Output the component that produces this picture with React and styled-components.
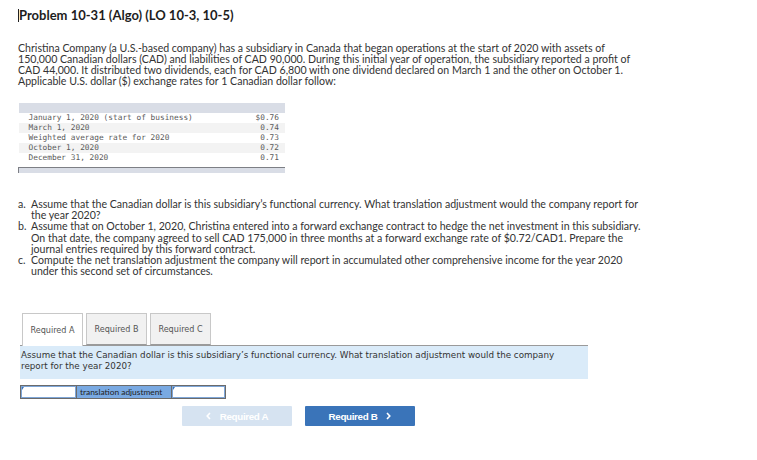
import React from "react";
import styled, { createGlobalStyle } from "styled-components";

const Global = createGlobalStyle`
  html, body { margin: 0; padding: 0; background: #fff; }
  body { font-family: "Lato", "Open Sans", sans-serif; color: #333; }
`;

const Page = styled.div`
  width: 757px;
  height: 460px;
  box-sizing: border-box;
  padding: 7px 0 0 18px;
  overflow: hidden;
`;

const Title = styled.h1`
  margin: 0;
  font-family: "Lato", sans-serif;
  font-weight: 700;
  font-size: 13px;
  line-height: 16px;
  color: #1d1d1d;
  display: flex;
  align-items: center;
`;

const Caret = styled.span`
  display: inline-block;
  width: 1px;
  height: 13px;
  background: #222;
`;

const Para = styled.p`
  margin: 20px 0 0 0;
  font-size: 10.6px;
  line-height: 11px;
  color: #333;
  white-space: nowrap;
`;

const RateTable = styled.table`
  margin-top: 16px;
  width: 267px;
  border-collapse: collapse;
  font-family: "DejaVu Sans Mono", "Liberation Mono", monospace;
  font-size: 7.8px;
  color: #5a5a5a;
`;

const HeadRow = styled.tr`
  height: 10px;
  background: #d9dde6;
`;

const Row = styled.tr`
  height: 10px;
  background: ${(p) => (p.$shade ? "#f3f3f3" : "#fff")};
`;

const Cell = styled.td`
  padding: 0 ${(p) => (p.$right ? "6px" : "0")} 0 ${(p) => (p.$right ? "0" : "10px")};
  text-align: ${(p) => (p.$right ? "right" : "left")};
  line-height: 10px;
  white-space: pre;
`;

const Spacer = styled.tr`
  height: 4px;
`;

const FootRow = styled.tr`
  height: 6px;
  background: #d9dde6;
  td {
    padding: 0;
    border-top: 1px solid #7d7f85;
  }
  td:first-child {
    border-left: 1px solid #7d7f85;
  }
`;

const List = styled.ol`
  margin: 26px 0 0 0;
  padding: 0;
  list-style: none;
  font-size: 10.6px;
  line-height: 11.2px;
  color: #333;
  white-space: nowrap;
`;

const Item = styled.li`
  display: grid;
  grid-template-columns: 13px auto;
`;

const Marker = styled.span``;

const TabArea = styled.div`
  margin-top: 36px;
  width: 568px;
  margin-left: 2px;
`;

const TabRow = styled.div`
  display: flex;
  gap: 3px;
  padding-left: 2px;
  height: 32px;
  position: relative;
  z-index: 1;
`;

const Tab = styled.div`
  width: 61px;
  box-sizing: border-box;
  height: ${(p) => (p.$active ? "33px" : "32px")};
  border: 1px solid #c8c8c8;
  border-bottom: ${(p) => (p.$active ? "none" : "1px solid #9a9a9a")};
  background: ${(p) => (p.$active ? "#fff" : "#f1f1f1")};
  font-family: "DejaVu Sans", Verdana, sans-serif;
  font-size: 8.1px;
  color: #555;
  display: flex;
  align-items: center;
  justify-content: center;
  white-space: nowrap;
`;

const Panel = styled.div`
  border-top: 1px solid #9a9a9a;
  background: #daebf9;
  padding: 4px 0 7px 1px;
  font-family: "DejaVu Sans", Verdana, sans-serif;
  font-size: 8.75px;
  line-height: 11px;
  color: #333;
  white-space: nowrap;
`;

const AnswerRow = styled.div`
  margin-top: 6px;
  margin-left: 2px;
  display: flex;
  width: max-content;
  border: 1.5px solid #6b6b6b;
  height: 12px;
`;

const AnswerInput = styled.div`
  position: relative;
  width: ${(p) => p.$w}px;
  background: #fff;
  border: 1px solid #7ea6d8;
  box-sizing: border-box;
  &::before {
    content: "";
    position: absolute;
    left: 0;
    top: 0;
    border-top: 3px solid #3a73b8;
    border-right: 2px solid transparent;
  }
`;

const AnswerLabel = styled.div`
  width: 96px;
  box-sizing: border-box;
  background: #79a9e2;
  border-left: 1px solid #6b6b6b;
  border-right: 1px solid #6b6b6b;
  padding-left: 3px;
  font-size: 8.4px;
  line-height: 12px;
  color: #222;
  white-space: nowrap;
  overflow: hidden;
`;

const NavRow = styled.div`
  margin-top: 7px;
  padding-left: 164px;
  display: flex;
  gap: 13px;
`;

const NavButton = styled.div`
  width: 110px;
  height: 20px;
  border-radius: 1px;
  background: ${(p) => (p.$disabled ? "#d6e3f1" : "#3a74b9")};
  color: #fff;
  font-family: "Liberation Sans", Arial, sans-serif;
  font-weight: 700;
  font-size: 9.8px;
  letter-spacing: -0.35px;
  display: flex;
  align-items: center;
  justify-content: center;
  gap: 9px;
`;

const Chevron = ({ dir }) => (
  <svg width="5" height="8" viewBox="0 0 5 8">
    <path
      d={dir === "left" ? "M4 1 L1.2 4 L4 7" : "M1 1 L3.8 4 L1 7"}
      fill="none"
      stroke="#fff"
      strokeWidth="1.6"
    />
  </svg>
);

const rates = [
  ["January 1, 2020 (start of business)", "$0.76"],
  ["March 1, 2020", "0.74"],
  ["Weighted average rate for 2020", "0.73"],
  ["October 1, 2020", "0.72"],
  ["December 31, 2020", "0.71"],
];

export default function App() {
  return (
    <>
      <Global />
      <Page>
        <Title>
          <Caret />
          Problem 10-31 (Algo) (LO 10-3, 10-5)
        </Title>
        <Para>
          Christina Company (a U.S.-based company) has a subsidiary in Canada that began operations at the start of 2020 with assets of
          <br />
          150,000 Canadian dollars (CAD) and liabilities of CAD 90,000. During this initial year of operation, the subsidiary reported a profit of
          <br />
          CAD 44,000. It distributed two dividends, each for CAD 6,800 with one dividend declared on March 1 and the other on October 1.
          <br />
          Applicable U.S. dollar ($) exchange rates for 1 Canadian dollar follow:
        </Para>
        <RateTable>
          <tbody>
            <HeadRow>
              <td colSpan={2} />
            </HeadRow>
            {rates.map(([label, value], i) => (
              <Row key={label} $shade={i % 2 === 1}>
                <Cell>{label}</Cell>
                <Cell $right>{value}</Cell>
              </Row>
            ))}
            <Spacer>
              <td colSpan={2} />
            </Spacer>
            <FootRow>
              <td />
              <td />
            </FootRow>
          </tbody>
        </RateTable>
        <List>
          <Item>
            <Marker>a.</Marker>
            <span>
              Assume that the Canadian dollar is this subsidiary’s functional currency. What translation adjustment would the company report for
              <br />
              the year 2020?
            </span>
          </Item>
          <Item>
            <Marker>b.</Marker>
            <span>
              Assume that on October 1, 2020, Christina entered into a forward exchange contract to hedge the net investment in this subsidiary.
              <br />
              On that date, the company agreed to sell CAD 175,000 in three months at a forward exchange rate of $0.72/CAD1. Prepare the
              <br />
              journal entries required by this forward contract.
            </span>
          </Item>
          <Item>
            <Marker>c.</Marker>
            <span>
              Compute the net translation adjustment the company will report in accumulated other comprehensive income for the year 2020
              <br />
              under this second set of circumstances.
            </span>
          </Item>
        </List>
        <TabArea>
          <TabRow>
            <Tab $active>Required A</Tab>
            <Tab>Required B</Tab>
            <Tab>Required C</Tab>
          </TabRow>
          <Panel>
            Assume that the Canadian dollar is this subsidiary’s functional currency. What translation adjustment would the company
            <br />
            report for the year 2020?
          </Panel>
        </TabArea>
        <AnswerRow>
          <AnswerInput $w={55} />
          <AnswerLabel>translation adjustment</AnswerLabel>
          <AnswerInput $w={53} />
        </AnswerRow>
        <NavRow>
          <NavButton $disabled>
            <Chevron dir="left" />
            Required A
          </NavButton>
          <NavButton>
            Required B
            <Chevron dir="right" />
          </NavButton>
        </NavRow>
      </Page>
    </>
  );
}
